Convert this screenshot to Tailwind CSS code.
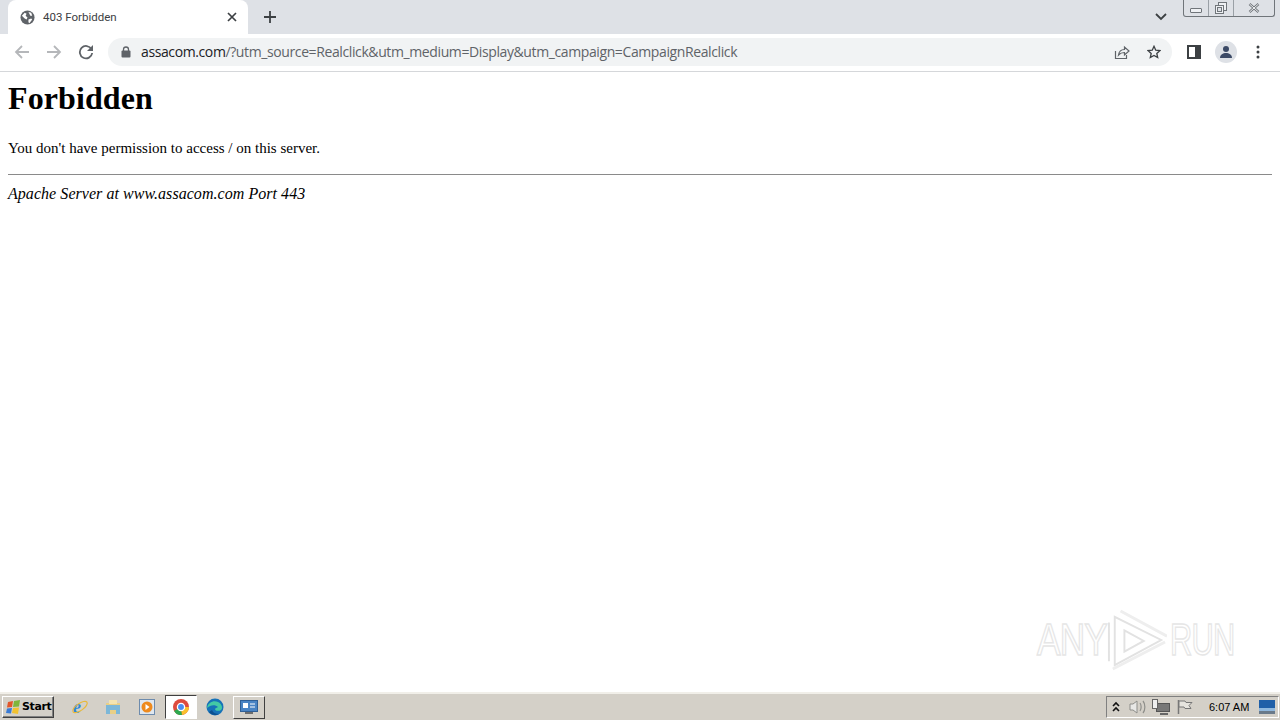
<!DOCTYPE html>
<html lang="en">
<head>
    <meta charset="UTF-8">
    <meta name="viewport" content="width=device-width, initial-scale=1.0">
    <title>403 Forbidden</title>
    <script src="https://cdn.jsdelivr.net/npm/@tailwindcss/browser@4"></script>
</head>
<body class="relative flex flex-col w-[1280px] h-[720px] overflow-hidden bg-white font-['Open_Sans',sans-serif]">

    <!-- tab strip -->
    <div class="flex h-[34px] shrink-0 bg-[#dee1e6]">
        <div class="flex items-center w-[240px] h-[34px] ml-2 pl-[12px] pr-[11px] bg-white rounded-t-lg">
            <svg class="w-[15px] h-[15px] shrink-0" viewBox="0 0 16 16"><circle cx="8" cy="8" r="7.500" fill="#5f6368"/><path d="M2 6l3-3 2 1-1 2 2 2-1 2-2-1zM9 2l3 1 1 3-2 0-1-2zM9 10l3-1 1 1-3 4-1-1z" fill="#fff"/></svg>
            <span class="ml-[8px] font-['Roboto',sans-serif] text-[11.500px] leading-4 text-[#3c4043]">403 Forbidden</span>
            <svg class="w-[10px] h-[10px] ml-auto" viewBox="0 0 10 10"><path d="M1 1l8 8M9 1l-8 8" stroke="#3c4043" stroke-width="1.700"/></svg>
        </div>
        <svg class="w-3 h-3 ml-[16px] mt-[11px]" viewBox="0 0 12 12"><path d="M6 0v12M0 6h12" stroke="#3c4043" stroke-width="1.800"/></svg>
        <svg class="w-[12px] h-[8px] ml-auto mt-[13px]" viewBox="0 0 12 8"><path d="M1 1l5 5 5-5" fill="none" stroke="#3c4043" stroke-width="1.800"/></svg>
        <!-- window buttons -->
        <div class="flex self-start h-[17px] ml-[16px] mr-[5px] border border-t-0 border-[#70757a] rounded-b-[3px]">
            <div class="flex items-center justify-center w-[25px] pt-1 border-r border-[#9aa0a6]"><div class="w-[12px] h-[5px] border border-[#70757a] rounded-[1px] bg-[#eef0f3]"></div></div>
            <div class="flex items-center justify-center w-[25px] border-r border-[#9aa0a6]">
                <svg class="w-3 h-3" viewBox="0 0 12 12"><rect x="3.500" y="0.500" width="8" height="8" fill="#eef0f3" stroke="#70757a"/><rect x="0.500" y="3.500" width="8" height="8" fill="#eef0f3" stroke="#70757a"/><rect x="2.500" y="5.500" width="4" height="4" fill="#dee1e6" stroke="#70757a"/></svg>
            </div>
            <div class="flex items-center justify-center w-[40px]">
                <svg class="w-3 h-[10px]" viewBox="0 0 12 10"><path d="M1.500 1l9 8M10.500 1l-9 8" stroke="#70757a" stroke-width="2.400"/><path d="M1.500 1l9 8M10.500 1l-9 8" stroke="#eef0f3" stroke-width="1"/></svg>
            </div>
        </div>
    </div>

    <!-- toolbar -->
    <div class="flex items-center h-[38px] shrink-0 pb-px bg-white border-b border-[#d5d7da]">
        <svg class="w-4 h-4 ml-[14px]" viewBox="0 0 16 16"><path d="M15 8H2M8 2L2 8l6 6" fill="none" stroke="#b5b7ba" stroke-width="1.800"/></svg>
        <svg class="w-4 h-4 ml-4" viewBox="0 0 16 16"><path d="M1 8h13M8 2l6 6-6 6" fill="none" stroke="#b5b7ba" stroke-width="1.800"/></svg>
        <svg class="w-4 h-4 ml-4" viewBox="0 0 16 16"><path d="M13.500 5.200A6.200 6.200 0 1 0 14.200 9" fill="none" stroke="#5f6368" stroke-width="1.800"/><path d="M15 1v6H9z" fill="#5f6368"/></svg>
        <div class="flex items-center w-[1064px] h-[28px] ml-[14px] pl-[13px] bg-[#f1f3f4] rounded-full">
            <svg class="w-[10px] h-[12px] shrink-0" viewBox="0 0 10 12"><path d="M2.500 5V3.500a2.500 2.500 0 0 1 5 0V5" fill="none" stroke="#5f6368" stroke-width="1.300"/><rect x="0.500" y="4.500" width="9" height="7" rx="1" fill="#5f6368"/></svg>
            <span class="ml-[10px] text-[14px] leading-5 tracking-[-0.39px] whitespace-nowrap text-[#5f6368]"><span class="text-[#202124]">assacom.com</span>/?utm_source=Realclick&amp;utm_medium=Display&amp;utm_campaign=CampaignRealclick</span>
            <svg class="w-4 h-4 ml-auto" viewBox="0 0 16 16"><path d="M1.500 7v7.500h11V11" fill="none" stroke="#5f6368" stroke-width="1.200"/><path d="M4.500 11c.5-3.500 3-5.500 6-5.500V3l4.500 4-4.500 4V8.500c-2.500 0-4.500.8-6 2.500z" fill="none" stroke="#5f6368" stroke-width="1.200"/></svg>
            <svg class="w-[14px] h-[14px] ml-[17px] mr-[11px]" viewBox="0 0 16 16"><path d="M8 1.500l2 4.400 4.800.5-3.600 3.200 1 4.700L8 11.900l-4.200 2.400 1-4.700L1.200 6.400 6 5.900z" fill="none" stroke="#3c4043" stroke-width="1.500"/></svg>
        </div>
        <svg class="w-[14px] h-[14px] ml-[15px]" viewBox="0 0 14 14"><rect x="1" y="1" width="12" height="12" fill="none" stroke="#3c4043" stroke-width="2"/><rect x="8" y="1" width="5" height="12" fill="#3c4043"/></svg>
        <div class="flex items-center justify-center w-[22px] h-[22px] ml-[14px] rounded-full bg-[#dee1e6]">
            <svg class="w-[14px] h-[14px]" viewBox="0 0 14 14"><circle cx="7" cy="4" r="3" fill="#3c4a66"/><path d="M1 13c0-3.500 3-5 6-5s6 1.500 6 5z" fill="#3c4a66"/></svg>
        </div>
        <svg class="w-1 h-[14px] ml-[19px]" viewBox="0 0 4 14"><circle cx="2" cy="2" r="1.500" fill="#3c4043"/><circle cx="2" cy="7" r="1.500" fill="#3c4043"/><circle cx="2" cy="12" r="1.500" fill="#3c4043"/></svg>
    </div>

    <!-- page -->
    <main class="flex-1 px-2 font-['Liberation_Serif',serif] text-black">
        <h1 class="mt-[8px] text-[32px] leading-[37px] font-bold tracking-[0.1px]">Forbidden</h1>
        <p class="mt-[22px] text-[15px] leading-[18px]">You don't have permission to access / on this server.</p>
        <hr class="mt-[17px] border-t border-[#8a8a8a]">
        <address class="mt-[10px] text-[16px] leading-[18px] italic tracking-[0.05px]">Apache Server at www.assacom.com Port 443</address>
    </main>

    <!-- watermark -->
    <div class="absolute left-[1037px] top-[608px] flex items-center pointer-events-none">
        <span class="font-['Liberation_Sans',sans-serif] text-[44px] leading-none tracking-[-1px] scale-x-[0.8] origin-left w-[70px] text-transparent [-webkit-text-stroke:1.500px_#e6e6e6]">ANY</span>
        <svg class="w-[60px] h-[64px]" viewBox="2 0 62 64"><path d="M4 14V54M10 8V58L58 32zM20 22V44L40 33z" fill="none" stroke="#e2e2e2" stroke-width="2"/><path d="M8 62L62 34M16 2L64 28" fill="none" stroke="#eeeeee" stroke-width="3"/></svg>
        <span class="ml-[3px] font-['Liberation_Sans',sans-serif] text-[44px] leading-none tracking-[-1px] scale-x-[0.7] origin-left w-[62px] text-transparent [-webkit-text-stroke:1.500px_#e6e6e6]">RUN</span>
    </div>

    <!-- taskbar -->
    <div class="flex items-center h-[28px] shrink-0 bg-[#d4d0c8] border-t-2 border-t-[#f1efe9] font-['Liberation_Sans',sans-serif]">
        <button class="flex items-center w-[52px] h-[22px] ml-[2px] pl-[2px] bg-[#d4d0c8] border border-t-white border-l-white border-r-[#404040] border-b-[#404040] shadow-[inset_-1px_-1px_0_#808080]">
            <svg class="w-4 h-4 shrink-0" viewBox="0 0 16 16"><path d="M3 3l5-1-1 6-5 .5z" fill="#e2562b"/><path d="M9 2l6-1-1 6.500-6 .5z" fill="#7fb53b"/><path d="M2 9.500l5-.5-1 5.500-5-.5z" fill="#3a7bd5"/><path d="M8 9l6-.5-1 6.500-6-1z" fill="#f2c230"/></svg>
            <span class="ml-px font-['DejaVu_Sans',sans-serif] text-[11px] leading-4 font-bold tracking-[-0.4px] text-black">Start</span>
        </button>
        <svg class="w-[18px] h-[18px] ml-[17px]" viewBox="0 0 18 18"><text x="2" y="15" font-family="Liberation Serif" font-size="18" font-style="italic" font-weight="bold" fill="#2f86d6">e</text><ellipse cx="9" cy="9" rx="8.500" ry="3.500" transform="rotate(-35 9 9)" fill="none" stroke="#e8b93c" stroke-width="1.200"/></svg>
        <svg class="w-[18px] h-[18px] ml-[15px]" viewBox="0 0 18 18"><path d="M2 5h14v11H2z" fill="#e9cf86"/><path d="M2 7h14v9h-4v-4H6v4H2z" fill="#7cb7d8"/><path d="M5 2h8v4H5z" fill="#f4e4b0"/></svg>
        <svg class="w-4 h-4 ml-[17px]" viewBox="0 0 16 16"><rect x="0.500" y="0.500" width="15" height="15" fill="#dfe7ef" stroke="#6d8bad"/><circle cx="8" cy="8" r="5.500" fill="#ee8a1d"/><path d="M6.500 5l4 3-4 3z" fill="#fff"/></svg>
        <div class="flex items-center justify-center w-[32px] h-[24px] ml-[10px] bg-white border border-t-[#404040] border-l-[#404040] border-r-white border-b-white">
            <svg class="w-4 h-4" viewBox="0 0 16 16"><circle cx="8" cy="8" r="8" fill="#dd4b3e"/><path d="M8 8L1 12A8 8 0 0 0 9 16z" fill="#2da94f"/><path d="M8 8h8A8 8 0 0 1 9 16z" fill="#fbc02d"/><circle cx="8" cy="8" r="3.600" fill="#4a8df0" stroke="#fff" stroke-width="1.300"/></svg>
        </div>
        <svg class="w-[18px] h-[18px] ml-[9px]" viewBox="0 0 18 18"><circle cx="9" cy="9" r="8.500" fill="#1672b8"/><path d="M1 10C2 4 8 2 12 4c4 2 5 6 3 8-2 1.500-6 1-6-1 0-1 2-1 3-2-3-3-8-2-11 1z" fill="#43c9a5"/><path d="M3 14c2 3 7 4 10 2-3 0-6-1-7-4z" fill="#0c4f8f"/></svg>
        <button class="flex items-center justify-center w-[32px] h-[23px] ml-[9px] bg-[#d4d0c8] border border-t-white border-l-white border-r-[#404040] border-b-[#404040]">
            <svg class="w-[18px] h-[15px]" viewBox="0 0 18 15"><rect x="0.500" y="0.500" width="17" height="11" fill="#4a84c4" stroke="#2f5f96"/><rect x="3" y="3" width="5" height="5" fill="#fff"/><path d="M10 4h5M10 7h5" stroke="#fff"/><path d="M5 13h8" stroke="#6d6d6d" stroke-width="2"/></svg>
        </button>
        <!-- tray -->
        <div class="flex items-center h-[22px] ml-auto mr-[1px] w-[173px] pl-[4px] border border-t-[#808080] border-l-[#808080] border-r-white border-b-white">
            <svg class="w-[10px] h-[12px]" viewBox="0 0 10 12"><path d="M2 5l3-3 3 3M2 10l3-3 3 3" fill="none" stroke="#111" stroke-width="1.600"/></svg>
            <svg class="w-[18px] h-[16px] ml-[8px]" viewBox="0 0 18 16"><path d="M1 5h3l4-3v12l-4-3H1z" fill="#e8e8e6" stroke="#8e8e8a"/><path d="M11 4c1.500 2 1.500 6 0 8M14 2c2.500 3 2.500 9 0 12" fill="none" stroke="#8e8e8a" stroke-width="1.200"/></svg>
            <svg class="w-[18px] h-[16px] ml-[5px]" viewBox="0 0 18 16"><rect x="4.500" y="4.500" width="13" height="8" fill="#777" stroke="#555"/><rect x="0.500" y="0.500" width="5" height="9" fill="#eee" stroke="#666"/><path d="M8 15h8" stroke="#666" stroke-width="2"/></svg>
            <svg class="w-[16px] h-[16px] ml-[7px]" viewBox="0 0 16 16"><path d="M1.500 1v14" stroke="#777" stroke-width="1.500"/><path d="M2 2h6l1 1.500h6l-3 3 2 3H8L7 8H2z" fill="#e6e4de" stroke="#777"/></svg>
            <span class="ml-[16px] text-[11px] leading-4 whitespace-nowrap text-black">6:07 AM</span>
            <svg class="w-[16px] h-[14px] ml-auto mr-[3px]" viewBox="0 0 16 14"><rect width="16" height="11" fill="#1f5fa8"/><rect y="8" width="16" height="3" fill="#8fb8de"/><rect y="11" width="16" height="3" fill="#6a7a8a"/></svg>
        </div>
    </div>

</body>
</html>
